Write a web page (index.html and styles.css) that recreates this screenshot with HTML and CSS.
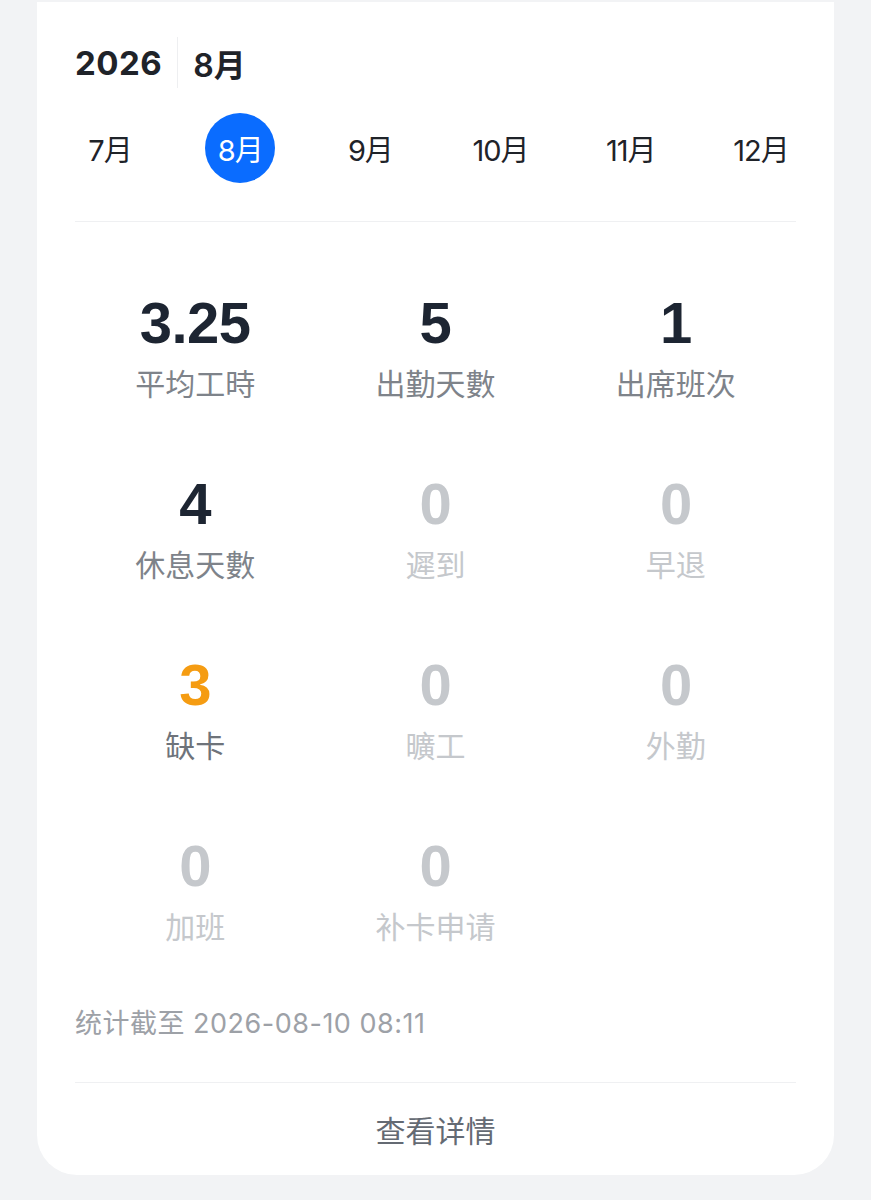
FILE: index.html
```html
<!DOCTYPE html>
<html lang="zh-CN">
<head>
    <meta charset="UTF-8">
    <meta name="viewport" content="width=device-width, initial-scale=1.0">
    <title>考勤统计</title>
    <link rel="stylesheet" href="styles.css">
</head>
<body>
    <div class="card">
        <div class="header">
            <span class="year">2026</span>
            <span class="sep"></span>
            <span class="cur-month">8月</span>
        </div>

        <div class="months">
            <div class="month">7月</div>
            <div class="month active">8月</div>
            <div class="month">9月</div>
            <div class="month">10月</div>
            <div class="month">11月</div>
            <div class="month">12月</div>
        </div>

        <div class="line"></div>

        <div class="stats">
            <div class="stat">
                <div class="num">3.25</div>
                <div class="label">平均工時</div>
            </div>
            <div class="stat">
                <div class="num">5</div>
                <div class="label">出勤天數</div>
            </div>
            <div class="stat">
                <div class="num">1</div>
                <div class="label">出席班次</div>
            </div>
            <div class="stat">
                <div class="num">4</div>
                <div class="label">休息天數</div>
            </div>
            <div class="stat zero">
                <div class="num">0</div>
                <div class="label">遲到</div>
            </div>
            <div class="stat zero">
                <div class="num">0</div>
                <div class="label">早退</div>
            </div>
            <div class="stat warn">
                <div class="num">3</div>
                <div class="label">缺卡</div>
            </div>
            <div class="stat zero">
                <div class="num">0</div>
                <div class="label">曠工</div>
            </div>
            <div class="stat zero">
                <div class="num">0</div>
                <div class="label">外勤</div>
            </div>
            <div class="stat zero">
                <div class="num">0</div>
                <div class="label">加班</div>
            </div>
            <div class="stat zero">
                <div class="num">0</div>
                <div class="label">补卡申请</div>
            </div>
        </div>

        <div class="updated">统计截至 2026-08-10 08:11</div>

        <div class="line line-bottom"></div>

        <div class="more">查看详情</div>
    </div>
</body>
</html>
```

FILE: styles.css
```css
body {
    margin: 0;
    background-color: #f2f3f5;
    font-family: Inter, "Noto Sans CJK SC", sans-serif;
    color: #1f2329;
}
.card {
    margin: 2px 37px 0;
    padding: 0 38px;
    background: #fff;
    border-radius: 0 0 40px 40px;
}
.header {
    display: flex;
    align-items: center;
    height: 51px;
    padding-top: 35px;
}
.year {
    font-size: 33px;
    font-weight: 700;
    letter-spacing: 0.5px;
}
.sep {
    width: 1px;
    height: 51px;
    background-color: #eeeff1;
    margin: 0 15px;
}
.cur-month {
    font-size: 32px;
    font-weight: 600;
}
.months {
    display: flex;
    justify-content: space-between;
    margin-top: 25px;
}
.month {
    width: 70px;
    height: 70px;
    border-radius: 50%;
    display: flex;
    align-items: center;
    justify-content: center;
    font-size: 29px;
    letter-spacing: -1px;
}
.month.active {
    background-color: #0a6cff;
    color: #fff;
}
.line {
    height: 1px;
    background-color: #eff0f2;
    margin-top: 38px;
}
.stats {
    display: grid;
    grid-template-columns: repeat(3, 1fr);
    row-gap: 72px;
    padding-top: 71px;
}
.stat {
    text-align: center;
}
.num {
    font-family: "Liberation Sans", Arial, sans-serif;
    font-size: 58px;
    font-weight: 700;
    line-height: 60px;
    color: #1d2532;
    letter-spacing: -0.5px;
}
.label {
    margin-top: 9px;
    font-family: "Noto Sans CJK SC", sans-serif;
    font-size: 30px;
    line-height: 40px;
    color: #7e838a;
}
.zero .num,
.zero .label {
    color: #c5c8cc;
}
.warn .num {
    color: #f59c12;
}
.warn .label {
    color: #6e737a;
}
.updated {
    margin-top: 59px;
    font-size: 27px;
    line-height: 40px;
    letter-spacing: 0.5px;
    color: #9da1a7;
}
.line-bottom {
    margin-top: 38px;
}
.more {
    height: 92px;
    line-height: 92px;
    text-align: center;
    font-family: "Noto Sans CJK SC", sans-serif;
    font-size: 30px;
    color: #646a73;
}
```
